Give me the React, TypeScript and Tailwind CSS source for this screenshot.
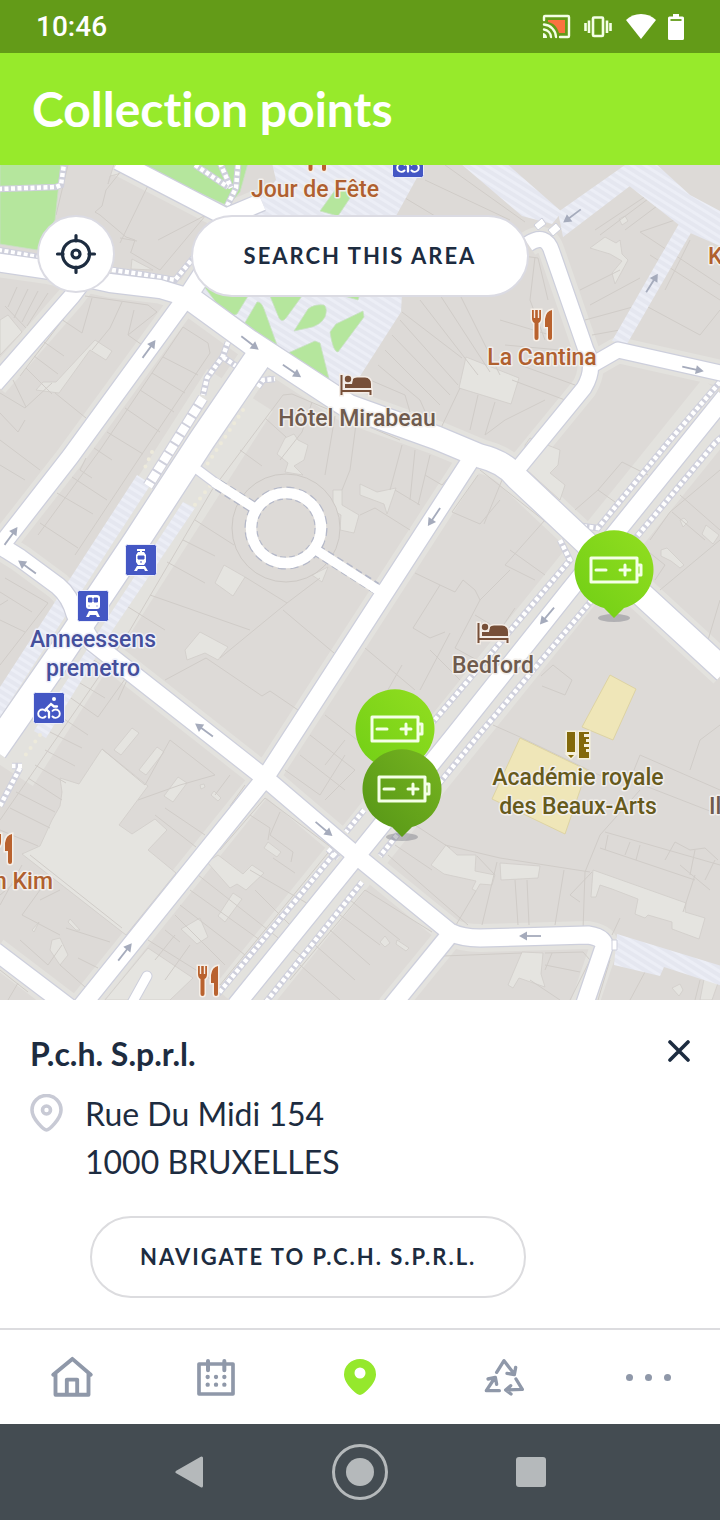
import React, { useState } from 'react';

interface CollectionPoint {
  id: number;
  name: string;
  street: string;
  city: string;
  position: string;
}

const POINTS: CollectionPoint[] = [
  { id: 1, name: 'Point Midi', street: 'Rue Du Midi 120', city: '1000 BRUXELLES', position: 'left-[574px] top-[365px]' },
  { id: 2, name: 'Point Sud', street: 'Rue Du Midi 150', city: '1000 BRUXELLES', position: 'left-[355px] top-[524px]' },
  { id: 3, name: 'P.c.h. S.p.r.l.', street: 'Rue Du Midi 154', city: '1000 BRUXELLES', position: 'left-[362px] top-[584px]' },
];

// Street centre lines: path and width
const ROADS: { d: string; w: number }[] = [
  { d: 'M118 161L226 217L262 202', w: 17 },
  { d: 'M244 210L188 296', w: 18 },
  { d: 'M-5 262L50 270L110 283L160 289L190 298', w: 18 },
  { d: 'M84 280L72 296L-5 384', w: 16 },
  { d: 'M186 298L70 457L-4 552', w: 17 },
  { d: 'M262 352L202 440L137 540L60 655L-6 750', w: 26 },
  { d: 'M-4 543L20 558L58 586Q70 596 75 614L92 642L265 778L353 853L450 932Q462 938 480 938L588 935Q608 938 603 950L584 1006', w: 17 },
  { d: 'M472 458L265 778L80 1008', w: 17 },
  { d: 'M725 397L568 592L452 738L236 1005', w: 17 },
  { d: 'M188 297L250 342L348 406L437 438L480 456Q505 462 517 478L600 556L725 671', w: 23 },
  { d: 'M528 244Q546 232 552 252L586 350Q596 368 584 388L512 476', w: 15 },
  { d: 'M590 366L618 350L725 374', w: 15 },
  { d: 'M452 932L390 1008', w: 17 },
  { d: 'M-5 951L70 1008', w: 17 },
];

const SIDEWALKS = [
  'M-2 189L56 187L61 185L64 164',
  'M-2 250L38 257',
  'M112 270L140 274L175 280L194 257',
  'M195 165L228 187M220 163L231 188M238 165L236 188L227 206',
  'M228 342L223 356L207 378L203 395M223 357L236 366',
  'M258 387L263 380L275 379',
  'M720 382L670 440L598 528L582 526',
  'M725 434L715 443L634 540',
  'M560 540L570 560L433 722',
  'M592 600L477 737L380 856',
  'M334 854L218 994M328 849L338 858',
  'M362 882L266 1002',
  'M22 766L12 766M20 768L0 806',
  'M364 810L346 832',
];

const STRIPED = [
  'M246 216L276 180L272 163L425 163L396 216Z',
  'M196 284L330 290L402 294L401 312L346 398L264 346L198 300Z',
  'M460 163L506 163L562 212L552 224L522 216Z',
  'M558 212L625 165L652 165L630 186L563 237Z',
  'M628 185L646 163L655 163L690 195L722 212L722 247L688 232Z',
  'M680 222L692 231L627 344L612 341Z',
  'M617 934L722 966L722 986L664 967L660 976L614 965Z',
  'M137 475L151 484L-2 720L-2 690Z',
  'M183 502L195 508L110 634L46 738L34 731Z',
];

const GREENS = [
  'M0 163H61L55 220L38 250L0 244Z',
  'M134 163L228 206L240 192L248 163Z',
  'M320 211L338 216L354 192L338 186Z',
  'M203 285L218 305Q232 318 237 314L248 296Z',
  'M270 296L279 318Q282 323 286 318L302 296Z',
  'M257 302Q261 301 264 309L277 345L243 326Z',
  'M294 331L308 309Q314 304 324 305Q328 308 325 317Q320 326 308 328Z',
  'M330 332L336 324L363 311L364 317L338 352Q333 352 330 332Z',
  'M288 353L315 341L320 343L329 379Z',
  'M344 296L360 294L358 300Z',
];

const YARDS = [
  'M95 340L112 351L106 360L90 350L59 393L36 390L43 382L56 382Z',
  'M0 320L8 315L22 332L0 355Z',
  'M108 184L110 176L118 174L127 164L114 164Z',
  'M132 259L153 270L131 269Z',
  'M466 357L519 378L511 404L459 388Z',
  'M590 248L605 237L616 243L620 240L622 254L628 260L615 284L612 273L622 261L610 254Z',
  'M619 219L625 216L628 221L622 225Z',
  'M525 445L530 438L560 450L558 465L550 473L565 485L560 500L527 470Z',
  'M285 438L294 434L298 440L308 445L304 460L294 466L303 475L285 472L288 463L277 454Z',
  'M224 565L245 577L233 596L215 583Z',
  'M200 632L228 647L218 660L205 653L187 660L185 650Z',
  'M333 490L342 490L342 505L359 515L354 533L340 530L341 515L333 510Z',
  'M312 575L328 567L322 582Z',
  'M360 484L377 492L396 488L387 514L384 504L360 495Z',
  'M102 749L148 786L119 825L132 834L155 819L167 830L148 850L176 873L126 935L22 854L40 846L52 820L60 806L62 792L60 778L79 784Z',
  'M132 728L139 733L121 755L114 750Z',
  'M157 747L164 752L146 775L139 770Z',
  'M178 777L187 783L173 802L164 796Z',
  'M200 785L204 784L205 787L201 789ZM214 791L221 798L218 801L211 795Z',
  'M268 842L281 852L277 857L264 848Z',
  'M207 862L218 855L243 874L252 865L264 873L246 890L237 884L230 888Z',
  'M233 893L242 899L225 922L218 916Z',
  'M181 929L200 918L208 937L197 944Z',
  'M148 948L193 978L170 1000L105 1000Z',
  'M52 940L60 938L68 955L60 965L50 950Z',
  'M70 919L80 930L76 930L68 922ZM39 922L34 932L32 930Z',
  'M446 845L457 855L476 855L475 871L495 875L492 885L480 884L476 891L472 889L476 881L444 874L431 865Z',
  'M500 863L540 866L538 878L501 880Z',
  'M593 870L686 903L685 912L705 918L699 939L672 929L672 922L648 915L645 918L635 914L638 899L612 889L600 885L596 897L591 897Z',
  'M672 988L680 984L683 990L679 996Z',
  'M522 952L543 953L541 974L545 987L519 978L513 988L508 985Z',
  'M661 550L667 548L684 565L680 568L671 561L661 556Z',
  'M680 520L684 518L688 522L683 527ZM706 525L719 535L713 544L702 534Z',
  'M380 942L385 936L390 943L385 947ZM397 940L409 948L406 951L396 944Z',
  'M705 974L718 983L712 1000H700Z',
];

// Parcel boundaries of the blocks
const PARCELS = [
  'M158 165L120 243M95 212L100 215L126 237L135 240L131 252M158 240L206 215L160 270L130 252M95 212L102 206L106 190L126 165M120 238L137 241M56 215L68 165',
  'M17 287L8 307M28 289L14 318M38 291L22 322M48 293L27 326M5 306L26 328',
  'M92 298L82 333L52 313M122 302L110 328L92 350M85 296L148 305L157 312L128 335L145 347M128 335L134 310M64 318L20 376M44 342L64 356M34 356L58 374M26 368L52 394M13 380L26 407M0 393L25 408M0 413L18 432M25 408L52 383M55 393L86 418M0 440L40 470M18 432L25 420',
  'M183 327L208 343L210 353L140 457L75 555M183 327L100 450L38 535M163 357L198 375M152 373L185 393M140 390L174 412M125 408L160 432M107 432L143 454M94 448L112 460M72 477L107 500M86 458L80 470L92 478M57 493L93 514M40 523L78 548',
  'M283 395L292 394L400 440M283 395L212 490M265 418L286 437M240 450L262 466M312 402L302 432L280 460M335 416L325 475M356 424L350 470L342 490',
  'M212 490L130 630L105 668M195 520L234 545M183 540L215 556M167 562L205 583M150 595L250 630M125 605L165 630M245 577L287 603L220 658M283 610L334 653M320 578L287 603M165 680L206 658L262 696L270 691L298 710',
  'M0 465L25 480M5 578L48 603L0 665M0 592L32 612M0 620L25 632M0 605L8 600',
  'M85 655L127 680L118 700M75 680L105 698M68 696L98 717M58 715L88 735M50 732L82 748M45 750L75 766M35 765L66 783M28 778L62 800M16 792L55 812M10 808L50 828M0 830L38 846M105 668L0 820M98 717L130 672M102 749L145 785L170 740M170 740L215 775L180 785M180 785L138 800M230 775L215 795M245 785L230 806M165 808L205 835M155 815L196 847',
  'M30 855L122 928M22 865L0 905M40 890L22 915L60 935M60 890L40 900M20 940L48 965L62 945M78 958L98 968M66 928L110 942M60 965L85 987M0 895L30 870M0 970L28 992M18 983L8 1000',
  'M265 798L332 848L220 985L148 940M265 798L220 850M250 815L270 828L268 840M280 812L270 835L293 852L291 862M250 870L310 905M273 858L295 873M255 890L290 925M198 875L300 955M190 890L260 940M180 905L245 955M175 915L225 965M165 930L180 942M190 945L165 980M175 935L155 960',
  'M310 735L355 770M325 715L370 750M300 755L345 790M285 770L320 795M320 795L345 755M345 740L325 765M355 770L325 800',
  'M420 165L400 195L450 225M425 180L510 220M445 165L525 222M400 195L360 230M600 235L660 190M655 190L595 230M665 200L625 230M675 220L640 232L720 285M650 255L720 300M590 305L640 278M580 290L620 270M585 320L640 305M592 335L620 330L645 290M690 240L665 290M635 300L700 335L720 310',
  'M402 312L462 358M420 300L478 375M440 295L490 372M460 295L500 375M400 320L458 385M392 335L450 395M385 350L440 405M378 365L420 400L428 418M370 380L405 395L410 412M460 388L440 430M478 395L470 430M495 402L485 435L505 420L545 400M535 257L530 300L545 340M515 255L538 258L548 300M500 320L550 335M505 345L560 350M520 365L575 385M512 380L565 400',
  'M402 445L390 490M415 450L410 500M430 455L418 505M455 470L442 485L425 475M360 515L375 508L410 530M395 490L420 505',
  'M478 475L452 512L480 524L500 500M502 480L484 524M545 520L505 565M510 550L545 575M480 470L575 545M505 565L535 580M415 573L440 585L455 592L463 580L475 590L480 600L510 570M440 585L413 628L430 638L445 632M480 600L455 648L495 670M475 615L500 630L515 608M450 633L420 690M430 650L460 680M402 665L385 695M365 648L415 690',
  'M575 510L598 490L622 462L648 475M598 490L615 502M650 540L670 512L720 470M680 495L720 530M660 590L720 540M672 512L705 540M640 545L665 565L655 580M720 600L708 640',
  'M541 676L553 665L572 680L565 695L542 686M493 725L520 737L620 785M640 755L720 790M640 755L630 780L720 815M690 770L700 740L720 725M640 790L600 835L585 872M605 832L720 865M600 848L695 880M608 835L605 850M630 842L625 855M640 845L636 860M665 860L675 842L690 850L705 848L718 860M695 850L690 875M680 865L710 890M715 860L705 880M695 875L683 912',
  'M395 845L432 870M388 855L468 925M412 823L450 848M476 891L456 925M497 862L482 925M515 880L518 925M527 880L529 925M564 870L555 925M585 872L583 930M592 872L570 895L580 902M620 918L612 935M445 845L500 858L590 872M477 856L495 875',
  'M443 956L522 953M545 953L583 952L590 960L570 1000M545 965L580 972M530 980L560 1000M552 953L545 970M432 932L365 890L290 980M350 900L400 940M340 915L380 945M330 930L370 965M315 945L355 980M300 965L340 1000M610 960L598 1000M645 972L630 1000M700 980L695 1000',
];

// [x, y, heading in degrees]
const ARROWS: number[][] = [
  [149, 349, -54], [250, 343, 38], [292, 371, 34], [572, 216, 143], [652, 283, -58], [693, 369, 12], [434, 517, 124],
  [547, 616, 130], [27, 567, 216], [11, 536, -54], [204, 730, 216], [324, 829, 40], [125, 952, -52], [530, 936, 180],
];

function Cutlery({ x, y }: { x: number; y: number }) {
  return (
    <g transform={`translate(${x} ${y})`} fill="#b9622e" stroke="#f6efe8" strokeWidth="3" paintOrder="stroke">
      <path d="M-10 -15H-8.200V-7H-6.800V-15H-4.200V-7H-2.800V-15H-1V-7Q-1 -3 -3.500 -2V13Q-3.500 15 -5.500 15T-7.500 13V-2Q-10 -3 -10 -7Z" />
      <path d="M10 -15V13Q10 15 8 15T6 13V2H3V-6Q4 -14 10 -15Z" />
    </g>
  );
}

function Bed({ x, y }: { x: number; y: number }) {
  return (
    <g transform={`translate(${x} ${y})`} fill="#774f38" stroke="#f3ece6" strokeWidth="3" paintOrder="stroke">
      <path d="M-15.500 -10H-13.500V5H15.500V10H13.500V7H-13.500V10H-15.500ZM-11 -1H-4L-3 -6Q-2 -7.500 1 -7.500H9Q15 -7 15 -1V3H-11Z" />
      <circle cx="-8" cy="-6" r="3.200" />
    </g>
  );
}

function TransitBadge({ x, y, children }: { x: number; y: number; children: React.ReactNode }) {
  return (
    <g transform={`translate(${x} ${y})`}>
      <rect x="-15.500" y="-15.500" width="31" height="31" rx="2" fill="#4457c4" stroke="#eceefa" />
      {children}
    </g>
  );
}

function Bike() {
  return (
    <g fill="none" stroke="#fff" strokeWidth="1.900" strokeLinecap="round">
      <path d="M-3.500 8.500A4.200 4.200 0 1 1 -3.500 2.800M3.500 2.800A4.200 4.200 0 1 1 3.500 8.500" />
      <path d="M0 9.500V4L-3 1L2 -4L5 -1.500H8" strokeWidth="2.300" />
      <circle cx="5" cy="-9" r="2" fill="#fff" stroke="none" />
    </g>
  );
}

function CityMap() {
  return (
    <svg className="absolute inset-0 h-full w-full" viewBox="0 165 720 835" preserveAspectRatio="xMidYMid slice" role="img" aria-label="Map">
      <defs>
        <pattern id="stripes" width="7" height="7" patternUnits="userSpaceOnUse" patternTransform="rotate(32)">
          <rect width="7" height="7" fill="#e5e7f0" />
          <rect width="7" height="3" fill="#eceef6" />
        </pattern>
      </defs>
      <rect y="160" width="720" height="845" fill="#dddad7" />

      <g fill="none" stroke="#e3e2de" strokeLinejoin="round">
        {ROADS.map((road) => (
          <path key={road.d} d={road.d} strokeWidth={road.w + 11} />
        ))}
        <path d="M725 397L568 592L236 1005" strokeWidth="58" />
        <path d="M240 390L0 765" strokeWidth="78" />
      </g>
      <path d={YARDS.join('')} fill="#e5e4e0" stroke="#d0cdc9" strokeWidth="0.800" />
      <path d={PARCELS.join('')} fill="none" stroke="#d0ccc8" strokeWidth="1" />
      <path d="M610 675L636 689L613 740L582 727ZM520 738L587 770L565 834L492 799Z" fill="#efe6b8" stroke="#ddd3a4" />
      <circle cx="286" cy="528" r="54" fill="#dddad7" stroke="#cdc9c5" />

      <path d={STRIPED.join('')} fill="url(#stripes)" />
      <path d={GREENS.join('')} fill="#b5e69d" stroke="#c9dfc4" strokeWidth="0.800" />

      {/* footpaths */}
      <g fill="none">
        <path d={SIDEWALKS.join('')} stroke="#cfd0dc" strokeWidth="6.500" />
        <path d={SIDEWALKS.join('')} stroke="#ffffff" strokeWidth="4.500" strokeDasharray="4 2.500" />
        <path d="M203 398L148 486" stroke="#cfd0dc" strokeWidth="11" />
        <path d="M203 398L148 486" stroke="#ffffff" strokeWidth="9" strokeDasharray="9 2" />
        <path d="M243 410L206 466M210 486L194 506M152 452L143 472M40 735L24 757" stroke="#edeadb" strokeWidth="4" strokeLinecap="round" strokeDasharray="0 8" />
      </g>

      {/* streets */}
      <g fill="none" strokeLinejoin="round">
        {ROADS.map((road) => (
          <path key={road.d} d={road.d} stroke="#cdcfdc" strokeWidth={road.w + 2.5} />
        ))}
        <path d="M198 470L218 485M132 1003L147 976" stroke="#cdcfdc" strokeWidth="11" strokeLinecap="round" />
        <path d="M218 485L256 509M316 550L376 588" stroke="#b4b8c8" strokeWidth="12" strokeDasharray="7 4" />
        <circle cx="286" cy="528" r="35" stroke="#b4b8c8" strokeWidth="13" strokeDasharray="7 4" />
        {ROADS.map((road) => (
          <path key={road.d} d={road.d} stroke="#ffffff" strokeWidth={road.w} />
        ))}
        <path d="M198 470L218 485M132 1003L147 976M374 588L382 592" stroke="#ffffff" strokeWidth="9" strokeLinecap="round" />
        <path d="M214 482L256 509M316 550L378 590" stroke="#ffffff" strokeWidth="9.500" />
        <circle cx="286" cy="528" r="35" stroke="#ffffff" strokeWidth="10.500" />
        <path d="M534 225L542 218L546 224L538 230ZM548 230L556 223L561 229L553 236ZM612 940L617 940V950H612Z" fill="#ffffff" stroke="#cdcfdc" />
      </g>

      {ARROWS.map(([x, y, angle]) => (
        <g key={`${x}-${y}`} transform={`translate(${x} ${y}) rotate(${angle})`}>
          <path d="M-11 0H5" stroke="#a5abbc" strokeWidth="1.800" />
          <path d="M11 0L3 -4.500V4.500Z" fill="#a5abbc" />
        </g>
      ))}

      <Cutlery x={542} y={325} />
      <Cutlery x={208} y={981} />
      <Cutlery x={2} y={849} />
      <Cutlery x={316} y={156} />
      <Bed x={356} y={385} />
      <Bed x={493} y={633} />
      <path d="M567 732H575V752H567ZM568 755H574L571 758ZM579 732H589V734H584V737H589V739H586V742H589V744H584V747H589V749H586V752H589V758H579Z" fill="#83690b" stroke="#f6f1dc" strokeWidth="3" paintOrder="stroke" />

      <TransitBadge x={408} y={162}><Bike /></TransitBadge>
      <TransitBadge x={49} y={708}><Bike /></TransitBadge>
      <TransitBadge x={141} y={560}>
        <path d="M-4 -10H4M0 -10V-7" fill="none" stroke="#fff" strokeWidth="2" />
        <path d="M-3 -8H3L5 -5V2L3 5H-3L-5 2V-5Z" fill="#fff" />
        <path d="M-3 -4H3V-1H-3ZM-1 2H1" fill="#4457c4" stroke="#4457c4" />
        <path d="M-7 11L-4 6H4L7 11H4L3 9H-3L-4 11Z" fill="#fff" />
      </TransitBadge>
      <TransitBadge x={93} y={606}>
        <rect x="-7" y="-11" width="14" height="14" rx="3" fill="#fff" />
        <path d="M-4.500 -8H-1V-4H-4.500ZM1 -8H4.500V-4H1ZM-4.500 0H-3.500M3.500 0H4.500" fill="#4457c4" stroke="#4457c4" />
        <path d="M-7 11L-4 5H4L7 11H4L3 9H-3L-4 11Z" fill="#fff" />
      </TransitBadge>

      {/* place names */}
      <g className="font-['Roboto',sans-serif] text-[23px] font-medium" textAnchor="middle" stroke="#f2efec" strokeWidth="3" strokeLinejoin="round" paintOrder="stroke">
        <g fill="#b0602f">
          <text x="315" y="197">Jour de Fête</text>
          <text x="542" y="365">La Cantina</text>
          <text x="53" y="889" textAnchor="end">n Kim</text>
          <text x="708" y="264" textAnchor="start">K</text>
        </g>
        <g fill="#6f5b4e">
          <text x="357" y="426">Hôtel Mirabeau</text>
          <text x="493" y="673">Bedford</text>
          <text x="709" y="814" textAnchor="start">Il</text>
        </g>
        <g fill="#454f9c" stroke="#eef0fa">
          <text x="93" y="647">Anneessens</text>
          <text x="93" y="676">premetro</text>
        </g>
        <g fill="#665a1c">
          <text x="578" y="785">Académie royale</text>
          <text x="578" y="814">des Beaux-Arts</text>
        </g>
      </g>
    </svg>
  );
}

function PinIcon({ selected }: { selected: boolean }) {
  const id = selected ? 'pin-dark' : 'pin-light';
  return (
    <svg className="block h-[92px] w-[80px]" viewBox="-40 -40 80 92">
      <defs>
        <linearGradient id={id} x1="0" y1="1" x2="1" y2="0">
          <stop offset="0" stopColor={selected ? '#559516' : '#70ce15'} />
          <stop offset="1" stopColor={selected ? '#76b420' : '#92de20'} />
        </linearGradient>
      </defs>
      <ellipse cy="48" rx="16" ry="4" fill="#5f6270" fillOpacity="0.350" />
      <path d="M0 48L-10 38A39.500 39.500 0 1 1 10 38Z" fill={`url(#${id})`} />
      <g fill="none" stroke="#f4ffe6" strokeWidth="3" strokeLinejoin="round" strokeLinecap="round">
        <path d="M-23 -12H23V12H-23ZM23 -5H27V5H23M-18 0H-8M6 0H16M11 -5V5" />
      </g>
    </svg>
  );
}

function StatusBar() {
  return (
    <div className="flex h-[53px] shrink-0 items-center bg-[#639b18] px-9 text-white">
      <span className="flex-1 font-['Roboto',sans-serif] text-[28px] leading-8 font-medium">10:46</span>
      <div className="flex items-center">
        <svg className="mr-3 h-[26px] w-[30px]" viewBox="0 0 30 26" fill="none" stroke="#f4ffe6" strokeWidth="2.400" strokeLinecap="round">
          <path d="M2 6V3Q2 2 3 2H26Q27 2 27 3V22Q27 23 26 23H18" />
          <path d="M6 6H23V19H17C15 12 11 9 6 8Z" fill="#fb7240" stroke="none" />
          <path d="M2 10.500A13 13 0 0 1 14 23M2 15.500A8 8 0 0 1 9 23" />
          <path d="M1 19A5 5 0 0 1 5 24H1Z" fill="#f4ffe6" stroke="none" />
        </svg>
        <svg className="mr-3 h-[26px] w-[30px]" viewBox="0 0 30 26" fill="none" stroke="#f4ffe6" strokeWidth="2.600">
          <rect x="9" y="3.500" width="10" height="18.500" rx="1" />
          <path d="M1.500 9V17M5 6.500V19M23 6.500V19M26.500 9V17" />
        </svg>
        <svg className="mr-3 h-[26px] w-[30px]" viewBox="0 0 30 26" fill="#fff">
          <path d="M15 25L0 6Q6 0 15 0T30 6Z" />
        </svg>
        <svg className="h-[26px] w-4" viewBox="0 0 16 26" fill="#fff">
          <path d="M5 0H11V2.500H14.500Q16 2.500 16 4V24.500Q16 26 14.500 26H1.500Q0 26 0 24.500V4Q0 2.500 1.500 2.500H5Z" />
          <path d="M2.500 6H13.500" stroke="#639b18" strokeWidth="1.800" />
        </svg>
      </div>
    </div>
  );
}

function TabBar() {
  return (
    <nav className="grid h-24 shrink-0 grid-cols-5 border-t-2 border-[#dcdcdf] bg-white text-[#8f98a9]">
      <a href="#home" aria-label="Home" className="flex items-center justify-center">
        <svg className="size-[44px]" viewBox="0 0 136 136" fill="none" stroke="currentColor" strokeWidth="12" strokeLinecap="round" strokeLinejoin="round">
          <path d="M10 61L69 12L126 61M17 56V123H119V56M52 123V76H84V123" />
        </svg>
      </a>
      <a href="#calendar" aria-label="Calendar" className="flex items-center justify-center">
        <svg className="size-[44px]" viewBox="0 0 132 132" fill="none" stroke="currentColor" strokeWidth="11" strokeLinecap="round" strokeLinejoin="round">
          <path d="M15 27H117V117H15Z" />
          <path d="M42 18V46M91 18V46" strokeWidth="12" />
          <path d="M41 66h.1M66 66h.1M91 66h.1M41 89h.1M66 89h.1M91 89h.1" strokeWidth="13" />
        </svg>
      </a>
      <a href="#points" aria-label="Collection points" aria-current="page" className="flex items-center justify-center text-[#95e82c]">
        <svg className="h-9 w-8" viewBox="0 0 32 36" fill="currentColor">
          <path fillRule="evenodd" d="M16 36C13 36 0 25 0 15.500A16 15.500 0 0 1 32 15.500C32 25 19 36 16 36ZM16 8.500A5.500 5.500 0 1 0 16 19.500A5.500 5.500 0 1 0 16 8.500Z" />
        </svg>
      </a>
      <a href="#recycle" aria-label="Recycle" className="flex items-center justify-center">
        <svg className="size-[40px]" viewBox="0 0 120 120" fill="none" stroke="currentColor" strokeWidth="10" strokeLinecap="round" strokeLinejoin="round">
          <path d="M38 46L60 11L90 50M95 31L91 53L69 49" />
          <path d="M96 66L115 97L66 99M80 86L65 99L81 111" />
          <path d="M46 101H7L32 63M12 66L34 61L38 82" />
        </svg>
      </a>
      <a href="#more" aria-label="More" className="flex items-center justify-center gap-3">
        <span className="size-[7px] rounded-full bg-current" />
        <span className="size-[7px] rounded-full bg-current" />
        <span className="size-[7px] rounded-full bg-current" />
      </a>
    </nav>
  );
}

export default function App() {
  const [selectedId, setSelectedId] = useState<number | null>(3);
  const selected = POINTS.find((p) => p.id === selectedId);

  return (
    <div className="flex min-h-screen flex-col bg-white font-['Lato',sans-serif] text-[#1d2c40]">
      <StatusBar />
      <header className="flex h-28 shrink-0 items-center bg-[#97ea2b] px-8">
        <h1 className="text-[48px] leading-[56px] font-bold text-white [font-variant-ligatures:none]">Collection points</h1>
      </header>

      <main className="relative min-h-[640px] flex-1 overflow-hidden">
        <CityMap />
        {POINTS.map((point) => (
          <button
            key={point.id}
            type="button"
            aria-label={point.name}
            onClick={() => setSelectedId(point.id)}
            className={`absolute cursor-pointer ${point.position}`}
          >
            <PinIcon selected={point.id === selectedId} />
          </button>
        ))}

        {/* Map controls */}
        <div className="absolute inset-x-0 top-[50px] grid grid-cols-[1fr_auto_1fr] items-start px-[37px]">
          <button type="button" aria-label="My location" className="flex size-[78px] items-center justify-center rounded-full border-2 border-[#dbdbe3] bg-white">
            <svg className="size-[42px]" viewBox="0 0 42 42" fill="none" stroke="currentColor" strokeWidth="3.200" strokeLinecap="round">
              <circle cx="21" cy="21" r="13.500" />
              <circle cx="21" cy="21" r="4" />
              <path d="M21 2.500V8M21 34V39.500M2.500 21H8M34 21H39.500" />
            </svg>
          </button>
          <button type="button" className="h-[82px] rounded-full border-2 border-[#dbdbe3] bg-white px-[51px] text-[22px] leading-7 font-bold tracking-[2px]">
            SEARCH THIS AREA
          </button>
        </div>
      </main>

      {selected && (
        <section className="shrink-0 px-[30px] py-[30px]">
          <div className="flex items-start justify-between">
            <h2 className="text-[32px] leading-[48px] font-bold">{selected.name}</h2>
            <button type="button" aria-label="Close" onClick={() => setSelectedId(null)} className="cursor-pointer pt-[10px]">
              <svg className="size-[22px]" viewBox="0 0 22 22" fill="none" stroke="currentColor" strokeWidth="3.600" strokeLinecap="round">
                <path d="M2 2L20 20M20 2L2 20" />
              </svg>
            </button>
          </div>
          <div className="mt-3 flex gap-[22px]">
            <svg className="mt-1 h-[38px] w-[33px]" viewBox="0 0 33 38" fill="none" stroke="#c8cad5" strokeWidth="3.600">
              <path d="M16.500 36C14 36 2 25 2 16A14.500 14.500 0 0 1 31 16C31 25 19 36 16.500 36Z" />
              <circle cx="16.500" cy="16" r="4" />
            </svg>
            <address className="text-[32px] leading-[48px] not-italic">
              {selected.street}
              <br />
              {selected.city}
            </address>
          </div>
          <button type="button" className="mt-[30px] ml-[60px] h-[82px] rounded-full border-2 border-[#dcdcdf] px-12 text-[22px] leading-7 font-bold tracking-[2px] uppercase">
            Navigate to {selected.name}
          </button>
        </section>
      )}

      <TabBar />

      {/* System navigation */}
      <div className="flex h-24 shrink-0 items-center justify-center gap-[115px] bg-[#444c52] text-[#b5b9bb]">
        <button type="button" aria-label="Back" className="flex size-14 items-center justify-center">
          <svg className="h-8 w-7" viewBox="0 0 28 32" fill="currentColor" stroke="currentColor" strokeWidth="3" strokeLinejoin="round">
            <path d="M2 16L26.500 2V30Z" />
          </svg>
        </button>
        <button type="button" aria-label="Home screen" className="flex size-14 items-center justify-center rounded-full border-[3px] border-current">
          <span className="size-7 rounded-full bg-current" />
        </button>
        <button type="button" aria-label="Recent apps" className="flex size-14 items-center justify-center">
          <span className="size-[30px] rounded-[3px] bg-current" />
        </button>
      </div>
    </div>
  );
}
